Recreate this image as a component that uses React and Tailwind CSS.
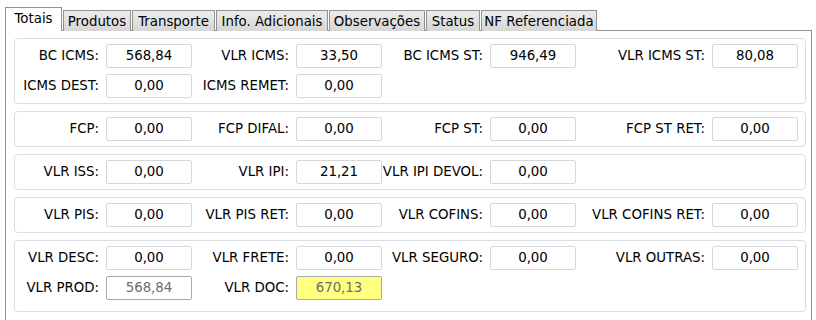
import React from 'react';

const tabs = [
    ['Totais', 'w-[57px]'],
    ['Produtos', 'w-[68px]'],
    ['Transporte', 'w-[83px]'],
    ['Info. Adicionais', 'w-[112px]'],
    ['Observações', 'w-[96px]'],
    ['Status', 'w-[54px]'],
    ['NF Referenciada', 'w-[116px]'],
];

const groups = [
    [
        [['BC ICMS:', '568,84'], ['VLR ICMS:', '33,50'], ['BC ICMS ST:', '946,49'], ['VLR ICMS ST:', '80,08']],
        [['ICMS DEST:', '0,00'], ['ICMS REMET:', '0,00']],
    ],
    [[['FCP:', '0,00'], ['FCP DIFAL:', '0,00'], ['FCP ST:', '0,00'], ['FCP ST RET:', '0,00']]],
    [[['VLR ISS:', '0,00'], ['VLR IPI:', '21,21'], ['VLR IPI DEVOL:', '0,00']]],
    [[['VLR PIS:', '0,00'], ['VLR PIS RET:', '0,00'], ['VLR COFINS:', '0,00'], ['VLR COFINS RET:', '0,00']]],
    [
        [['VLR DESC:', '0,00'], ['VLR FRETE:', '0,00'], ['VLR SEGURO:', '0,00'], ['VLR OUTRAS:', '0,00']],
        [['VLR PROD:', '568,84', 'ro'], ['VLR DOC:', '670,13', 'doc']],
    ],
];

const labelWidths = ['w-[91px]', 'w-[104px]', 'w-[108px]', 'w-[136px]'];

const Field = ({ label, value, kind, col }) => {
    let inputCls = 'border-[#d6d6d6] bg-white text-black';
    if (kind === 'ro') inputCls = 'border-[#a9a9a9] bg-white text-[#6d6d6d]';
    if (kind === 'doc') inputCls = 'border-[#a9a9a9] bg-[#ffff80] text-[#6d6d6d]';
    return (
        <div className="flex items-center">
            <div className={`${labelWidths[col]} pr-[7px] text-right whitespace-nowrap`}>{label}</div>
            <div className={`w-[86px] h-[24px] border rounded-[2px] flex items-center justify-center ${inputCls}`}>
                {value}
            </div>
        </div>
    );
};

export default function App() {
    return (
        <div
            className="bg-white w-[816px] h-[320px] overflow-hidden pt-[8px] pl-[5px] text-[13.33px] text-black"
            style={{ fontFamily: '"DejaVu Sans", Verdana, sans-serif' }}
        >
            <div className="flex items-end h-[23px] relative z-10">
                {tabs.map(([t, w], i) =>
                    i === 0 ? (
                        <div
                            key={t}
                            className={`${w} h-[24px] border border-b-0 border-[#919191] bg-white flex items-center justify-center leading-none pb-[2px] whitespace-nowrap`}
                        >
                            {t}
                        </div>
                    ) : (
                        <div
                            key={t}
                            className={`${w} h-[21px] border border-b-0 border-[#919191] bg-gradient-to-b from-[#ececec] to-[#d6d6d6] flex items-center justify-center ml-[1px] leading-none pt-[1px] whitespace-nowrap`}
                        >
                            {t}
                        </div>
                    )
                )}
            </div>
            <div className="w-[807px] h-[300px] border border-[#919191] -mt-[1px] pt-[7px] pl-[8px] pr-[5px] flex flex-col gap-[7px]">
                {groups.map((rows, gi) => (
                    <div
                        key={gi}
                        className={`border border-[#d9dde3] rounded-[4px] pr-[6px] pt-[5px] ${gi === 4 ? 'pb-[11px]' : 'pb-[5px]'} flex flex-col gap-[6px]`}
                    >
                        {rows.map((row, ri) => (
                            <div key={ri} className="flex">
                                {row.map(([label, value, kind], ci) => (
                                    <Field key={label} label={label} value={value} kind={kind} col={ci} />
                                ))}
                            </div>
                        ))}
                    </div>
                ))}
            </div>
        </div>
    );
}
